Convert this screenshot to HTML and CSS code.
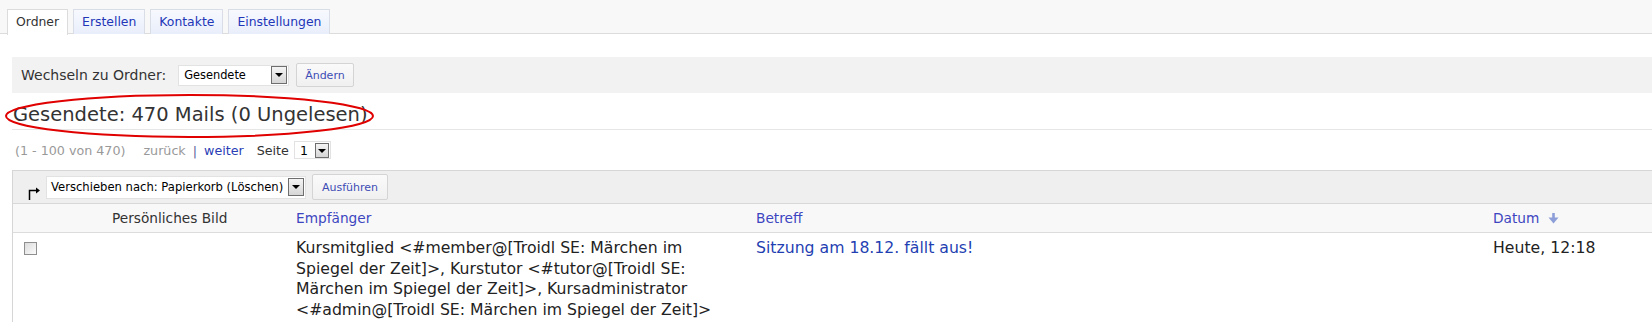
FILE: index.html
```html
<!DOCTYPE html>
<html>
<head>
    <title>Mail - Ordner</title>
    <link rel="stylesheet" href="styles.css">
</head>
<body>
    <div class="tabs">
        <a class="tab active" href="#">Ordner</a>
        <a class="tab" href="#">Erstellen</a>
        <a class="tab" href="#">Kontakte</a>
        <a class="tab" href="#">Einstellungen</a>
    </div>

    <div class="content">
        <div class="folder-bar">
            <span class="folder-label">Wechseln zu Ordner:</span>
            <span class="fake-select folder-select">
                <span class="fake-select-text">Gesendete</span>
                <span class="fake-select-btn"></span>
            </span>
            <button class="btn">Ändern</button>
        </div>

        <div class="folder-title">
            Gesendete: 470 Mails (0 Ungelesen)
            <svg class="marker" width="380" height="48" viewBox="0 0 380 48">
                <ellipse cx="189.5" cy="23" rx="183.5" ry="21" fill="none" stroke="#e00000" stroke-width="2"/>
            </svg>
        </div>

        <div class="pager">
            <span class="range">(1 - 100 von 470)</span>
            <span class="prev">zurück</span>
            <span class="sep">|</span>
            <a class="next" href="#">weiter</a>
            <span class="page-label">Seite</span>
            <span class="fake-select page-select">
                <span class="fake-select-text">1</span>
                <span class="fake-select-btn"></span>
            </span>
        </div>

        <div class="mail-box">
            <div class="action-bar">
                <svg class="action-arrow" width="14" height="14" viewBox="0 0 14 14">
                    <path d="M1.5 14 V4.5 H8" fill="none" stroke="#000" stroke-width="1.5"/>
                    <polygon points="8,1.5 12,4.5 8,7.5" fill="#000"/>
                </svg>
                <span class="fake-select action-select">
                    <span class="fake-select-text">Verschieben nach: Papierkorb (Löschen)</span>
                    <span class="fake-select-btn"></span>
                </span>
                <button class="btn">Ausführen</button>
            </div>

            <table class="mail-table">
                <colgroup>
                    <col style="width: 91px">
                    <col style="width: 184px">
                    <col style="width: 460px">
                    <col style="width: 737px">
                    <col>
                </colgroup>
                <thead>
                    <tr>
                        <th></th>
                        <th>Persönliches Bild</th>
                        <th><a href="#">Empfänger</a></th>
                        <th><a href="#">Betreff</a></th>
                        <th>
                            <a href="#">Datum</a>
                            <svg class="sort-arrow" width="11" height="12" viewBox="0 0 11 12">
                                <path d="M5.5 1 V9" stroke="#8d9ed8" stroke-width="2.6"/>
                                <polygon points="0.5,5.5 10.5,5.5 5.5,11.5" fill="#8d9ed8"/>
                            </svg>
                        </th>
                    </tr>
                </thead>
                <tbody>
                    <tr>
                        <td class="check-cell"><span class="checkbox"></span></td>
                        <td></td>
                        <td>Kursmitglied &lt;#member@[Troidl SE: Märchen im Spiegel der Zeit]&gt;, Kurstutor &lt;#tutor@[Troidl SE: Märchen im Spiegel der Zeit]&gt;, Kursadministrator &lt;#admin@[Troidl SE: Märchen im Spiegel der Zeit]&gt;</td>
                        <td><a class="subject" href="#">Sitzung am 18.12. fällt aus!</a></td>
                        <td>Heute, 12:18</td>
                    </tr>
                </tbody>
            </table>
        </div>
    </div>
</body>
</html>
```

FILE: styles.css
```css
body {
    margin: 0;
    font-family: "DejaVu Sans", Verdana, sans-serif;
    color: #333;
    background: #fff;
    overflow: hidden;
}
a {
    color: #2a3db5;
    text-decoration: none;
}
.tabs {
    display: flex;
    gap: 5px;
    padding: 9px 0 0 7px;
    background: #f8f8f8;
    border-bottom: 1px solid #dcdcdc;
    height: 24px;
}
.tab {
    display: block;
    height: 24px;
    line-height: 23px;
    padding: 0 8px;
    font-size: 12.4px;
    color: #2236b8;
    border: 1px solid #d9dde6;
    border-bottom: none;
    background: linear-gradient(#f7f9fe, #e9eefb);
}
.tab.active {
    color: #333;
    background: #fff;
    border-color: #dcdcdc;
    height: 25px;
    margin-bottom: -1px;
}
.content {
    padding-left: 12px;
}
.folder-bar {
    margin-top: 23px;
    height: 36px;
    background: #f2f2f2;
    display: flex;
    align-items: center;
    padding-left: 9px;
    font-size: 14px;
}
.folder-label {
    margin-right: 12px;
}
.fake-select {
    display: inline-flex;
    align-items: center;
    background: #fff;
    border: 1px solid #e2e2e2;
    height: 21px;
    font-size: 11.4px;
    color: #000;
    box-sizing: border-box;
}
.fake-select-text {
    flex: 1;
    padding-left: 5px;
    white-space: nowrap;
    overflow: hidden;
}
.fake-select-btn {
    width: 16px;
    height: 18px;
    margin-right: 1px;
    border: 1px solid #6e6e6e;
    box-sizing: border-box;
    background: linear-gradient(#f4f4f4, #d6d6d6);
    position: relative;
}
.fake-select-btn::after {
    content: "";
    position: absolute;
    left: 3px;
    top: 6px;
    border-left: 4px solid transparent;
    border-right: 4px solid transparent;
    border-top: 4px solid #000;
}
.folder-select {
    width: 111px;
}
.btn {
    margin-left: 7px;
    height: 24px;
    padding: 0 8px;
    font-family: inherit;
    font-size: 11px;
    color: #3d4db5;
    background: linear-gradient(#fafafa, #f0f0f0);
    border: 1px solid #d4d4d4;
    border-radius: 2px;
}
.folder-title {
    position: relative;
    height: 29px;
    line-height: 29px;
    padding: 7px 0 0 1px;
    font-size: 19.5px;
    color: #333;
    border-bottom: 1px solid #e6e6e6;
}
.marker {
    position: absolute;
    left: -12px;
    top: 0;
}
.pager {
    margin: 10px 0 10px 3px;
    height: 20px;
    display: flex;
    align-items: center;
    font-size: 12.7px;
}
.pager .range {
    color: #999;
    margin-right: 18px;
}
.pager .prev {
    color: #999;
    margin-right: 7px;
}
.pager .sep {
    color: #5a5a9a;
    margin-right: 7px;
}
.pager .next {
    margin-right: 13px;
}
.pager .page-label {
    margin-right: 5px;
}
.page-select {
    width: 37px;
    height: 18px;
    font-size: 12.5px;
}
.page-select .fake-select-btn {
    height: 15px;
    width: 14px;
}
.page-select .fake-select-btn::after {
    top: 5px;
    left: 2px;
}
.mail-box {
    width: 1700px;
    border-left: 1px solid #d6d6d6;
    border-top: 1px solid #d6d6d6;
}
.action-bar {
    height: 32px;
    background: #efefef;
    display: flex;
    align-items: center;
    padding-left: 15px;
    border-bottom: 1px solid #d8d8d8;
}
.action-arrow {
    margin-top: 12px;
    margin-right: 4px;
}
.action-select {
    width: 260px;
    height: 23px;
    font-size: 11.6px;
}
.action-select .fake-select-text {
    padding-left: 4px;
}
.action-bar .btn {
    margin-left: 6px;
    height: 26px;
    padding: 0 9px;
}
.mail-table {
    width: 100%;
    table-layout: fixed;
    border-collapse: collapse;
    font-size: 13.7px;
}
.mail-table th {
    background: #f8f8f8;
    font-weight: normal;
    text-align: left;
    height: 28px;
    padding: 0 8px;
    border-bottom: 1px solid #dcdcdc;
    color: #333;
}
.mail-table th a {
    color: #3d46c0;
}
.sort-arrow {
    margin-left: 4px;
    vertical-align: -1px;
}
.mail-table td {
    vertical-align: top;
    padding: 5px 8px;
    font-size: 15.7px;
    line-height: 20.5px;
    color: #222;
}
.mail-table td.check-cell {
    padding: 9px 0 0 11px;
}
.checkbox {
    display: block;
    width: 11px;
    height: 11px;
    border: 1px solid #8f8f8f;
    background: linear-gradient(135deg, #dcdcdc, #fbfbfb);
}
.subject {
    color: #1f3fb2;
}
```
